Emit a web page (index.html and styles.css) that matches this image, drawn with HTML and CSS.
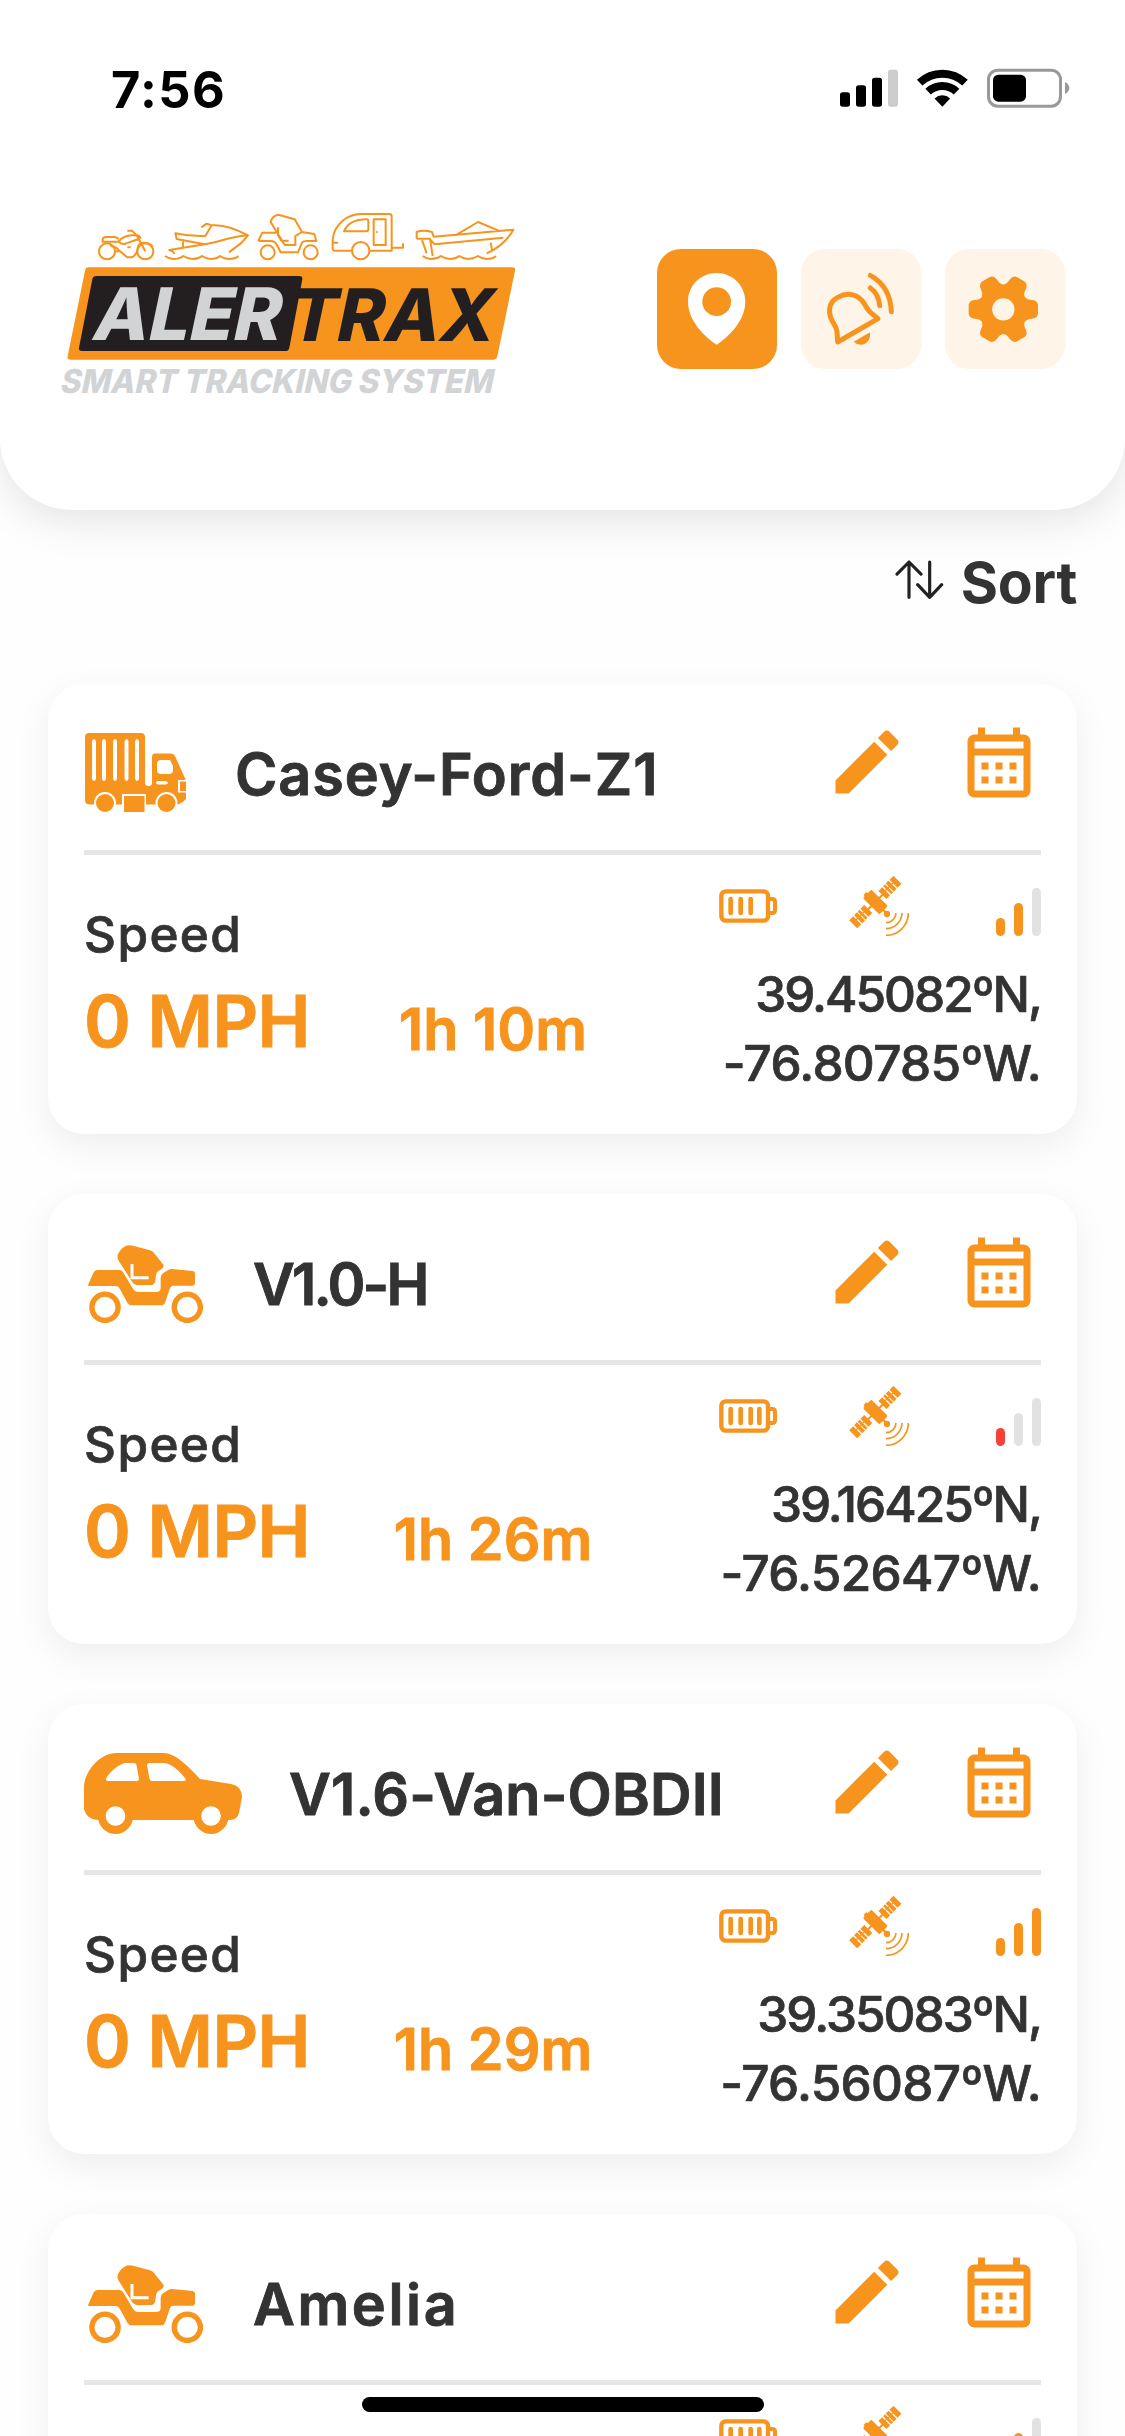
FILE: index.html
```html
<!DOCTYPE html>
<html lang="en">
<head>
<meta charset="utf-8">
<title>AlerTrax</title>
<link rel="stylesheet" href="styles.css">
</head>
<body>
<svg class="sprite" aria-hidden="true">
  <symbol id="pencil" viewBox="0 0 24 24"><path d="M20.71 7.04C21.1 6.65 21.1 6 20.71 5.63L18.37 3.29C18 2.9 17.35 2.9 16.96 3.29L15.12 5.12L18.87 8.87M3 17.25V21H6.75L17.81 9.93L14.06 6.18L3 17.25Z"/></symbol>
  <symbol id="calendar" viewBox="0 0 24 24"><path fill-rule="evenodd" d="M6 1H8V3H16V1H18V3H19A2 2 0 0 1 21 5V19A2 2 0 0 1 19 21H5A2 2 0 0 1 3 19V5A2 2 0 0 1 5 3H6ZM5 5V7H19V5ZM5 9V19H19V9ZM7 11H9V13H7ZM11 11H13V13H11ZM15 11H17V13H15ZM7 15H9V17H7ZM11 15H13V17H11ZM15 15H17V17H15Z"/></symbol>
  <symbol id="battery3" viewBox="117 627 174 102"><g fill="none" stroke="currentColor"><rect x="124" y="634" width="140" height="88" rx="13" stroke-width="13"/><path d="M270 657H277Q285 657 285 665V691Q285 699 277 699H270" stroke-width="12"/><path d="M152 657V699M182 657V699M212 657V699" stroke-width="14" stroke-linecap="round"/></g></symbol>
  <symbol id="battery4" viewBox="117 627 174 102"><use href="#battery3" x="117" y="627" width="174" height="102"/><path d="M238 657V699" fill="none" stroke="currentColor" stroke-width="14" stroke-linecap="round"/></symbol>
  <symbol id="satellite" viewBox="507 588 180 180">
    <g transform="translate(586 666) rotate(-45)">
      <rect x="-18" y="-35" width="36" height="70" rx="5"/><rect x="-10" y="-40" width="12" height="8"/>
      <rect x="-40" y="-3" width="80" height="6"/>
      <path d="M77-17H94V17H77ZM61-17H73V17H61ZM50-17H58V17H50ZM30-17H46V17H30ZM30-5H94V-1H30ZM-77-17H-94V17H-77ZM-61-17H-73V17H-61ZM-50-17H-58V17H-50ZM-30-17H-46V17H-30ZM-30-5H-94V-1H-30Z"/>
      <rect x="-3" y="34" width="6" height="14"/>
    </g>
    <circle cx="621" cy="702" r="9.500"/>
    <path d="M618 728A30 30 0 0 0 648 699M618 746A48 48 0 0 0 666 699M618 766A67 67 0 0 0 685 699" fill="none" stroke="currentColor" stroke-width="5"/>
  </symbol>
  <symbol id="truck" viewBox="0 0 101 79">
    <path fill-rule="evenodd" d="M4 0H56Q60 0 60 4V50Q60 53 63.500 53Q67 53 67 50V24Q67 20.500 70 20.500H86Q89 20.500 90 23L99 43Q101 46 101 50V66Q98 70 93 71.500H4Q0 71 0 67V4Q0 0 4 0ZM7 8V46Q9 50 11 46V8Q9 4 7 8ZM17 8V46Q19 50 21 46V8Q19 4 17 8ZM28 8V46Q30 50 32 46V8Q30 4 28 8ZM39.500 8V46Q41.500 50 43.500 46V8Q41.500 4 39.500 8ZM50 8V46Q52 50 54 46V8Q52 4 50 8ZM76 27Q72 27 72 31V37Q72 41 76 41H84Q88 41 88 37V33L85 27ZM73 48Q69 49.500 73 51.500H81Q85 50 81 48Z"/>
    <g class="cut"><circle cx="20" cy="70" r="11"/><circle cx="81.500" cy="70" r="11"/><rect x="37" y="61" width="24" height="18"/><path d="M93 47H101V59.500H93Z"/></g>
    <circle cx="20" cy="70" r="9"/><circle cx="81.500" cy="70" r="9"/><rect x="39" y="63" width="20.500" height="16"/><path d="M95 48.500H101V58H95Z"/>
  </symbol>
  <symbol id="buggy" viewBox="54 75 345 234">
    <path d="M163 80Q176 73 192 78L240 91Q248 93 252 99L279 133Q284 140 276 146L264 154Q259 158 258 166L256 182Q253 195 243 195H200Q192 195 187 187L146 122Q139 110 146 98Q152 86 163 80Z"/>
    <path class="cut-line" d="M186 132V173H236"/>
    <path d="M82 150H148Q155 150 159 156L188 205Q194 216 204 216H258Q272 216 272 204V174Q272 164 280 159L296 149Q300 147 306 147L368 153Q375 154 375 161V190Q375 197 368 197H310Q303 197 300 204L286 245Q283 256 274 256H186Q177 256 172 248L148 204Q144 198 138 198H58Q53 198 55 193L70 159Q74 150 82 150Z"/>
    <g fill="none" stroke="currentColor" stroke-width="16"><circle cx="105" cy="262" r="39.500"/><circle cx="352" cy="262" r="39.500"/></g>
  </symbol>
  <symbol id="car" viewBox="0 0 158 81">
    <path fill-rule="evenodd" d="M32 0H80C92 0 108 17 116 26L147 31Q158 33 158 44L155 60Q153 67 146 67H14Q3 67 0 56V34C0 20 15 0 32 0ZM41 10C35 11 25 19 22 26Q22 28 24 28H53Q55 28 55 26L52.500 12Q52 10 50 10ZM65 10Q63 10 63 12L65.500 26Q66 28 68 28H100Q103 28 101 25C97 20 88 10 80 10Z"/>
    <circle cx="31.500" cy="63.500" r="17.500"/><circle cx="127" cy="63.500" r="17.500"/>
    <g class="cut"><circle cx="31.500" cy="63" r="9.800"/><circle cx="127" cy="63" r="9.800"/></g>
  </symbol>
</svg>

<header class="top">
  <div class="status">
    <span class="time">7:56</span>
    <svg class="status-icons" viewBox="60 55 690 120">
      <rect x="60" y="128" width="30" height="43" rx="8"/><rect x="108" y="107" width="30" height="64" rx="8"/><rect x="156" y="84" width="30" height="87" rx="8"/><rect x="204" y="60" width="30" height="111" rx="8" fill="#ccc"/>
      <path d="M299 99A99 99 0 0 1 435 99M324.300 126A62 62 0 0 1 409.700 126" fill="none" stroke="#000" stroke-width="24"/>
      <path d="M367 171L343.600 146.300A34 34 0 0 1 390.400 146.300Z"/>
      <rect x="505.500" y="61.500" width="216" height="108" rx="28" fill="none" stroke="#999" stroke-width="9"/><rect x="519" y="75" width="99" height="81" rx="16"/><path d="M735 97Q748 104 748 115Q748 126 735 133Z" fill="#999"/>
    </svg>
  </div>
  <div class="brand-row">
    <svg class="logo" viewBox="0 0 1500 660" role="img" aria-label="AlerTrax Smart Tracking System">
      <g class="outline">
        <circle cx="201" cy="184" r="24"/><circle cx="316" cy="184" r="24"/>
        <path d="M188 158V148Q190 141 198 141H222Q230 141 236 147M188 155H236Q248 166 258 160L296 147M236 154Q250 136 284 135Q300 135 302 146M226 184H240L262 202H276Q292 194 294 170Q298 158 310 158Q330 158 338 170M262 122H276L290 136L316 184M210 166L230 174L240 184M262 172H272"/>
        <path d="M484 112L500 101L515 106L496 138Q450 140 406 130L410 147L494 163M515 106C550 102 590 118 624 136L605 158L567 187M624 136C580 138 530 158 494 163L388 180L398 184L403 192M430 150L428 174"/>
        <path d="M375 198Q388 207 400 207Q418 207 430 198Q444 207 458 207Q474 207 486 198Q498 207 512 207Q530 207 540 198Q552 207 566 207Q586 207 595 198"/>
        <circle cx="683" cy="187" r="21"/><circle cx="812" cy="187" r="21"/>
        <path d="M655 153H692Q706 153 711 166L722 187H774L786 158Q790 153 800 153H829L823 132L786 126L766 138V165H734L692 96Q696 78 715 74L764 88L786 126M655 153L667 128H708M714 112V136L724 152H746"/>
        <path d="M936 182H884Q878 182 878 174V150C882 100 926 72 962 72H1048Q1055 72 1055 80V182H988M878 158H894M1055 173H1089V160M912 124C922 100 946 88 980 88Q985 88 985 94V118Q985 124 979 124ZM1001 88H1037V165H1001ZM1011 124V128"/>
        <circle cx="962" cy="182" r="26"/>
        <path d="M1130 146V126Q1150 118 1176 126L1181 140L1420 119Q1395 165 1340 190M1130 146L1170 146L1178 198M1146 150L1160 190M1172 150L1184 163L1390 143M1246 136L1314 96L1376 122M1352 158L1356 180"/>
        <path d="M1148 198Q1160 207 1172 207Q1190 207 1203 198Q1216 207 1230 207Q1246 207 1258 198Q1270 207 1284 207Q1300 207 1314 198Q1326 207 1340 207Q1358 207 1368 198"/>
      </g>
      <path d="M146 232H1416Q1427 232 1425 242L1372 499Q1370 509 1360 509H92Q81 509 83 499L135 242Q137 232 146 232Z" fill="#f7941d"/>
      <path d="M170 258H778Q788 258 787 268L748 473Q746 483 736 483H126Q115 483 117 473L157 268Q159 258 170 258Z" fill="#231f20"/>
      <g class="logo-word">
        <text transform="translate(150 450) skewX(-12)" textLength="564" lengthAdjust="spacingAndGlyphs" fill="#d1d3d4">ALER</text>
        <text transform="translate(736 454) skewX(-12)" textLength="616" lengthAdjust="spacingAndGlyphs" fill="#231f20">TRAX</text>
      </g>
      <text class="logo-tag" transform="translate(58 609) skewX(-12)" textLength="1298" lengthAdjust="spacingAndGlyphs">SMART TRACKING SYSTEM</text>
    </svg>
    <nav class="nav">
      <a class="nav-btn active"><svg viewBox="0 0 360 360"><path fill-rule="evenodd" d="M179 72C131 72 93 110 93 158C93 216 146 266 179 287C212 266 265 216 265 158C265 110 227 72 179 72ZM179 115A43 43 0 1 1 179 201A43 43 0 1 1 179 115Z"/></svg></a>
      <a class="nav-btn"><svg viewBox="0 0 360 360"><g fill="none" stroke="currentColor" stroke-width="15" stroke-linecap="round" stroke-linejoin="round"><path d="M231 209L110 279L108 248Q107 238 100 227C77 192 82 160 110 145C142 128 172 136 190 164Q198 181 208 190Z"/><path d="M208 79Q268 112 271 188M208 117Q233 134 236 170"/></g><path d="M158 278L207 250Q210 274 192 284Q174 292 158 278Z"/></svg></a>
      <a class="nav-btn"><svg viewBox="0 0 360 360"><g transform="translate(175 181)"><g id="teeth"><path id="tooth" d="M0 0L58-44L64-37Q72-28 86-28Q104-26 104-12V12Q104 26 86 28Q72 28 64 37L58 44Z"/><use href="#tooth" transform="rotate(60)"/><use href="#tooth" transform="rotate(120)"/></g><use href="#teeth" transform="rotate(180)"/><circle r="33.500" fill="#fef4e8"/></g></svg></a>
    </nav>
  </div>
</header>

<main>
  <div class="sort">
    <svg viewBox="105 121 146 116"><path d="M147 233V127M111 163L147 127L183 163M209 127V233M173 195L209 233L245 195"/></svg>
    <span>Sort</span>
  </div>
  <section class="list">
    <article class="card">
      <div class="card-head"><svg class="vehicle truck"><use href="#truck"/></svg><h2 class="name wide">Casey-Ford-Z1</h2><div class="actions"><svg class="edit"><use href="#pencil"/></svg><svg class="cal"><use href="#calendar"/></svg></div></div>
      <div class="card-body">
        <div class="speed"><span class="label">Speed</span><span class="value">0 MPH</span></div>
        <div class="duration">1h 10m</div>
        <div class="where"><div class="signals"><svg class="battery"><use href="#battery3"/></svg><svg class="satellite"><use href="#satellite"/></svg><div class="bars"><i class="on"></i><i class="on"></i><i></i></div></div><p class="coord"><span class="lat">39.45082ºN,</span><span class="lon">-76.80785ºW.</span></p></div>
      </div>
    </article>
    <article class="card">
      <div class="card-head"><svg class="vehicle buggy"><use href="#buggy"/></svg><h2 class="name tight">V1.0-H</h2><div class="actions"><svg class="edit"><use href="#pencil"/></svg><svg class="cal"><use href="#calendar"/></svg></div></div>
      <div class="card-body">
        <div class="speed"><span class="label">Speed</span><span class="value">0 MPH</span></div>
        <div class="duration">1h 26m</div>
        <div class="where"><div class="signals"><svg class="battery"><use href="#battery4"/></svg><svg class="satellite"><use href="#satellite"/></svg><div class="bars"><i class="weak"></i><i></i><i></i></div></div><p class="coord"><span class="lat">39.16425ºN,</span><span class="lon">-76.52647ºW.</span></p></div>
      </div>
    </article>
    <article class="card">
      <div class="card-head"><svg class="vehicle car"><use href="#car"/></svg><h2 class="name">V1.6-Van-OBDII</h2><div class="actions"><svg class="edit"><use href="#pencil"/></svg><svg class="cal"><use href="#calendar"/></svg></div></div>
      <div class="card-body">
        <div class="speed"><span class="label">Speed</span><span class="value">0 MPH</span></div>
        <div class="duration">1h 29m</div>
        <div class="where"><div class="signals"><svg class="battery"><use href="#battery4"/></svg><svg class="satellite"><use href="#satellite"/></svg><div class="bars"><i class="on"></i><i class="on"></i><i class="on"></i></div></div><p class="coord"><span class="lat">39.35083ºN,</span><span class="lon">-76.56087ºW.</span></p></div>
      </div>
    </article>
    <article class="card">
      <div class="card-head"><svg class="vehicle buggy"><use href="#buggy"/></svg><h2 class="name wider">Amelia</h2><div class="actions"><svg class="edit"><use href="#pencil"/></svg><svg class="cal"><use href="#calendar"/></svg></div></div>
      <div class="card-body">
        <div class="speed"></div><div class="duration"></div>
        <div class="where"><div class="signals"><svg class="battery"><use href="#battery4"/></svg><svg class="satellite"><use href="#satellite"/></svg><div class="bars"><i class="on"></i><i class="on"></i><i></i></div></div></div>
      </div>
    </article>
  </section>
</main>
<div class="home-bar"></div>
</body>
</html>
```
FILE: styles.css
```css
* { box-sizing: border-box; margin: 0; padding: 0; }

html { height: 2436px; overflow: hidden; }
body {
  position: relative;
  width: 1125px;
  height: 2436px;
  overflow: hidden;
  background: #fefefe;
  color: #333;
  font-family: Inter, "Noto Sans", sans-serif;
}

svg { display: block; fill: currentColor; flex: none; }
.sprite { position: absolute; width: 0; height: 0; }
.cut { fill: #fff; }
.cut-line { fill: none; stroke: #fff; stroke-width: 9; }

.top {
  height: 510px;
  background: #fff;
  border-radius: 0 0 72px 72px;
  box-shadow: 0 12px 42px rgba(0, 0, 0, .1);
}
.status {
  display: flex;
  justify-content: space-between;
  height: 132px;
  padding: 68px 55px 0 111px;
  color: #000;
}
.time { font-size: 50.5px; line-height: 43px; font-weight: 700; letter-spacing: 1.4px; }
.status-icons { width: 230px; height: 40px; }

.brand-row {
  display: flex;
  justify-content: space-between;
  padding: 58px 60px 0 40px;
}
.logo { width: 500px; height: 220px; }
.outline { fill: none; stroke: #f7941d; stroke-width: 6; stroke-linejoin: round; }
.logo-word { font-size: 217px; font-weight: 800; }
.logo-tag { font-size: 99px; font-weight: 800; fill: #d1d3d4; }

.nav { display: flex; gap: 24px; padding-top: 59px; }
.nav-btn {
  width: 120px;
  height: 120px;
  border-radius: 24px;
  background: #fef4e8;
  color: #f7941d;
}
.nav-btn.active { background: #f7941d; color: #fff; }

main { height: 1926px; overflow: hidden; }
.sort {
  display: flex;
  justify-content: flex-end;
  gap: 17px;
  height: 174px;
  padding: 43px 48px 0 0;
  font-size: 57px;
  line-height: 60px;
  font-weight: 700;
  letter-spacing: -.3px;
}
.sort svg {
  width: 48.7px;
  height: 38.7px;
  margin-top: 7px;
  fill: none;
  stroke: #222;
  stroke-width: 9.5;
  stroke-linecap: round;
  stroke-linejoin: round;
}

.list { display: flex; flex-direction: column; gap: 60px; padding: 0 48px; }
.card {
  flex: none;
  height: 450px;
  padding: 0 36px;
  border-radius: 36px;
  background: #fff;
  box-shadow: 0 12px 36px rgba(0, 0, 0, .065);
}
.card-head {
  display: flex;
  align-items: center;
  height: 171px;
  padding-top: 14px;
  border-bottom: 5px solid #e6e6e6;
}
.vehicle { color: #f7941d; }
.truck { width: 101px; height: 79px; margin: 0 49px 3px 1px; }
.buggy { width: 115px; height: 78px; margin: 0 50px 0 4px; }
.car { width: 158px; height: 81px; margin: 0 47px 2px 0; }
.name, .value, .duration { -webkit-text-stroke: .9px currentColor; }
.label, .coord { -webkit-text-stroke: .7px currentColor; }
.name { font-size: 57.5px; line-height: 60px; font-weight: 600; letter-spacing: .15px; white-space: nowrap; }
.name.wide { letter-spacing: .95px; }
.name.wider { letter-spacing: 2.6px; }
.name.tight { letter-spacing: -2.8px; }
.actions { display: flex; gap: 48px; margin-left: auto; align-self: flex-start; color: #f7941d; }
.edit, .cal { width: 84px; height: 84px; }
.edit { margin-top: 21.5px; }
.cal { margin-top: 25.5px; }

.card-body { display: grid; grid-template-columns: 302px 214px 1fr; }
.speed { display: flex; flex-direction: column; gap: 15.5px; padding-top: 48.5px; }
.label { font-size: 49.5px; line-height: 60px; font-weight: 500; letter-spacing: 1.4px; }
.value {
  font-size: 71px;
  line-height: 84px;
  font-weight: 600;
  letter-spacing: -.6px;
  color: #f7941d;
  white-space: nowrap;
}
.duration {
  padding-top: 144px;
  text-align: center;
  font-size: 57.5px;
  line-height: 60px;
  font-weight: 600;
  color: #f7941d;
  white-space: nowrap;
}
.where { display: flex; flex-direction: column; align-items: flex-end; padding-top: 21px; }
.signals { display: flex; height: 60px; color: #f7941d; }
.battery { width: 58px; height: 34px; margin: 13px 72px 0 0; }
.satellite { width: 60px; height: 60px; margin-right: 87px; }
.bars { display: flex; align-items: flex-end; gap: 9px; }
.bars i { width: 9px; border-radius: 5px; background: #e2e2e2; }
.bars i:nth-child(1) { height: 18px; }
.bars i:nth-child(2) { height: 33px; }
.bars i:nth-child(3) { height: 48px; }
.bars .on { background: #f7941d; }
.bars .weak { background: #f44336; }
.coord {
  display: flex;
  flex-direction: column;
  align-items: flex-end;
  margin-top: 23.5px;
  font-size: 49.5px;
  line-height: 69px;
  font-weight: 500;
  white-space: nowrap;
}
.lat { letter-spacing: -2px; }
.lon { letter-spacing: -.7px; }

.home-bar {
  position: absolute;
  left: 362px;
  bottom: 24px;
  width: 402px;
  height: 15px;
  border-radius: 8px;
  background: #000;
}
```
